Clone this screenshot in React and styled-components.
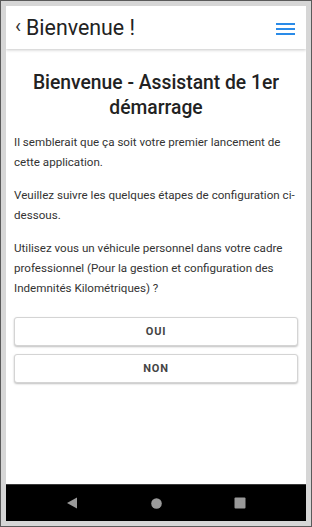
import React from "react";
import styled, { createGlobalStyle } from "styled-components";

const Global = createGlobalStyle`
  html, body { margin: 0; padding: 0; background: #d6d6d6; }
  body { font-family: Roboto, "Noto Sans", sans-serif; }
  * { box-sizing: border-box; }
`;

const Frame = styled.div`
  width: 312px;
  height: 527px;
  border: 1px solid #5a5a5a;
  background: #d6d6d6;
  padding: 5px;
  display: flex;
`;

const Screen = styled.div`
  flex: 1;
  display: flex;
  flex-direction: column;
  background: #fff;
  overflow: hidden;
`;

const Header = styled.header`
  height: 43px;
  display: flex;
  align-items: center;
  padding: 0 11px 0 9px;
  background: #fff;
  box-shadow: 0 1px 3px rgba(0, 0, 0, 0.22);
  position: relative;
  z-index: 1;
`;

const Back = styled.span`
  font-size: 20px;
  color: #333;
  margin-right: 5px;
  line-height: 1;
  margin-top: -4px;
`;

const Title = styled.h1`
  margin: 0;
  flex: 1;
  font-size: 21.4px;
  font-weight: 400;
  color: #222;
`;

const Menu = styled.div`
  width: 19px;
  display: flex;
  flex-direction: column;
  gap: 3px;
  margin-top: 2px;
  span {
    height: 2px;
    background: #2a8be8;
  }
`;

const Content = styled.main`
  flex: 1;
  padding: 21px 8px 0 8px;
`;

const Heading = styled.h2`
  margin: 0 0 12px;
  text-align: center;
  font-size: 19.3px;
  font-weight: 500;
  line-height: 25px;
  color: #222;
`;

const Para = styled.p`
  margin: 0 0 13px;
  font-size: 11.6px;
  line-height: 20px;
  color: #333;
`;

const Buttons = styled.div`
  display: flex;
  flex-direction: column;
  gap: 8px;
  margin-top: 19px;
`;

const Button = styled.button`
  height: 29px;
  border: 1px solid #d4d4d4;
  border-radius: 3px;
  background: #fff;
  box-shadow: 0 1px 2px rgba(0, 0, 0, 0.25);
  font-family: Roboto, sans-serif;
  font-size: 11px;
  font-weight: 700;
  letter-spacing: 0.8px;
  color: #444;
`;

const NavBar = styled.nav`
  height: 37px;
  background: #000;
  border-top: 1px solid #3a3a3a;
  display: grid;
  grid-template-columns: repeat(3, 84px);
  justify-content: center;
  align-items: center;
  justify-items: center;
`;

export default function App() {
  return (
    <>
      <Global />
      <Frame>
        <Screen>
          <Header>
            <Back>‹</Back>
            <Title>Bienvenue !</Title>
            <Menu>
              <span />
              <span />
              <span />
            </Menu>
          </Header>
          <Content>
            <Heading>Bienvenue - Assistant de 1er démarrage</Heading>
            <Para>Il semblerait que ça soit votre premier lancement de cette application.</Para>
            <Para>Veuillez suivre les quelques étapes de configuration ci-dessous.</Para>
            <Para>
              Utilisez vous un véhicule personnel dans votre cadre professionnel (Pour la gestion et
              configuration des Indemnités Kilométriques) ?
            </Para>
            <Buttons>
              <Button>OUI</Button>
              <Button>NON</Button>
            </Buttons>
          </Content>
          <NavBar>
            <svg width="12" height="12" viewBox="0 0 12 12">
              <path d="M11 0.5 L11 11.5 L1 6 Z" fill="#9a9a9a" />
            </svg>
            <svg width="11" height="11" viewBox="0 0 11 11">
              <circle cx="5.5" cy="5.5" r="5.3" fill="#9a9a9a" />
            </svg>
            <svg width="12" height="12" viewBox="0 0 12 12">
              <rect x="0.5" y="0.5" width="11" height="11" rx="1" fill="#9a9a9a" />
            </svg>
          </NavBar>
        </Screen>
      </Frame>
    </>
  );
}
